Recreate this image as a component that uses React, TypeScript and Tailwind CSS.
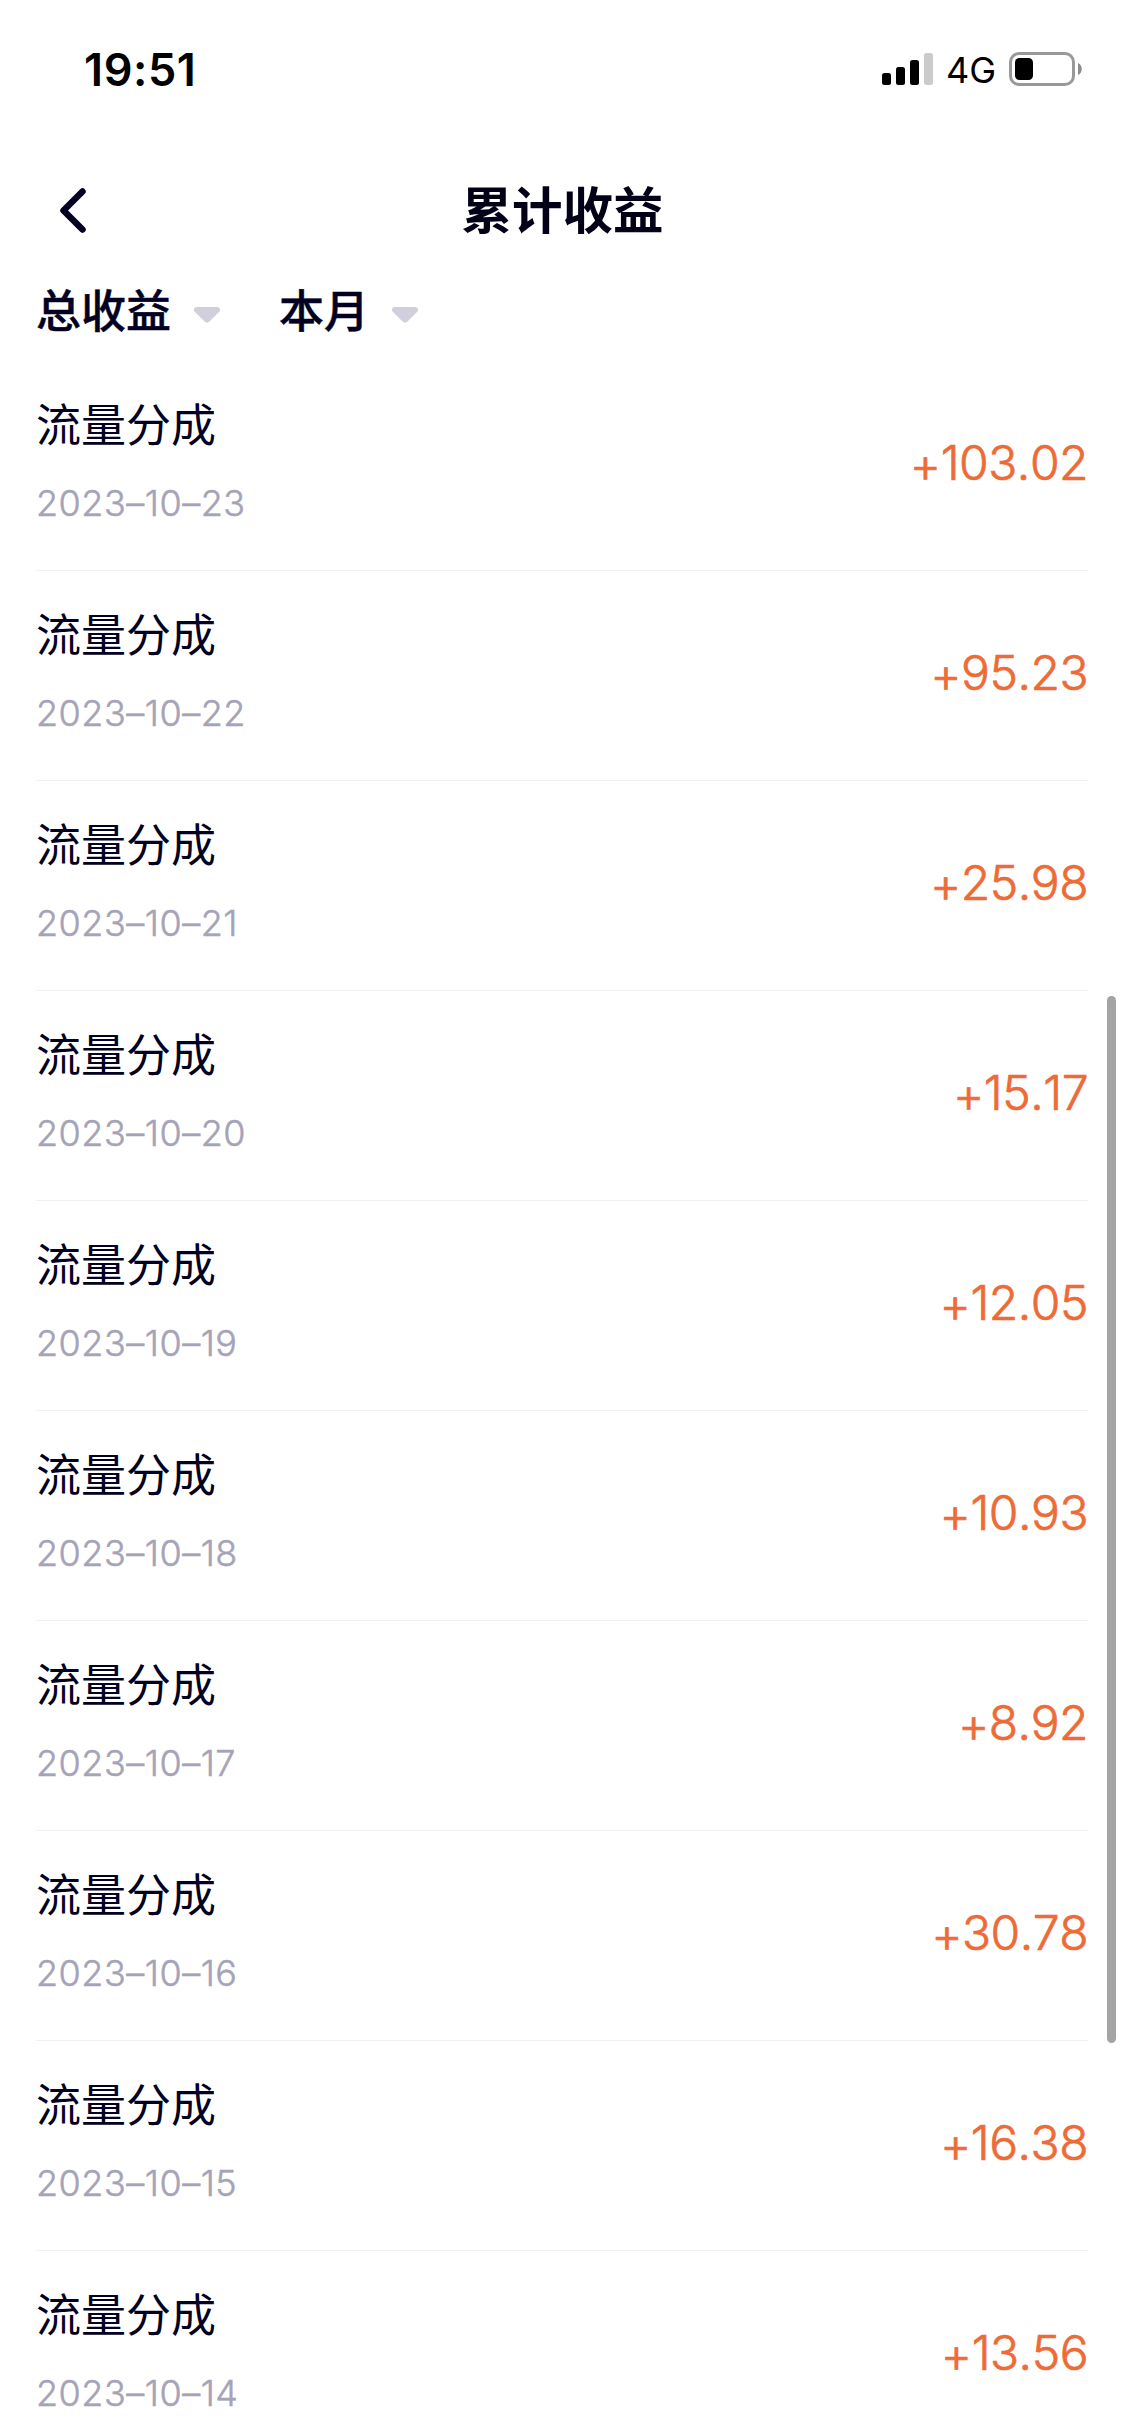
type Income = {
  date: string;
  amount: string;
};

// 收益列表
const incomes: Income[] = [
  { date: "2023–10–23", amount: "103.02" },
  { date: "2023–10–22", amount: "95.23" },
  { date: "2023–10–21", amount: "25.98" },
  { date: "2023–10–20", amount: "15.17" },
  { date: "2023–10–19", amount: "12.05" },
  { date: "2023–10–18", amount: "10.93" },
  { date: "2023–10–17", amount: "8.92" },
  { date: "2023–10–16", amount: "30.78" },
  { date: "2023–10–15", amount: "16.38" },
  { date: "2023–10–14", amount: "13.56" },
];

// 顶部状态栏
function StatusBar() {
  return (
    <div className="flex h-[138px] items-center justify-between pl-[84px] pr-[42px] text-black">
      <span className="text-[45px] leading-none font-semibold tracking-[0.6px]">19:51</span>
      <div className="flex items-center">
        {/* 信号 */}
        <svg width="52" height="32" viewBox="0 0 52 32">
          <rect x="0" y="20" width="9" height="12" rx="2.5" />
          <rect x="14" y="14" width="9" height="18" rx="2.5" />
          <rect x="28" y="7" width="9" height="25" rx="2.5" />
          <rect x="42" y="0" width="9" height="32" rx="2.5" fill="#cbcbcb" />
        </svg>
        <span className="mt-[2px] ml-[12px] w-[52px] text-[36px] leading-none whitespace-nowrap">4G</span>
        {/* 电池 */}
        <svg className="ml-[11px]" width="74" height="34" viewBox="0 0 74 34">
          <rect x="1.5" y="1.5" width="63" height="31" rx="8.5" fill="none" stroke="#999" strokeWidth="3" />
          <rect x="6" y="6" width="18" height="22" rx="4.5" />
          <path d="M69 11c5 2 5 10 0 12z" fill="#8c8c8c" />
        </svg>
      </div>
    </div>
  );
}

// 下拉筛选
function Filter({ label }: { label: string }) {
  return (
    <button className="flex items-center text-[45px] leading-[60px] font-medium [-webkit-text-stroke:0.5px]">
      {label}
      <svg className="mt-[5px] ml-[23px]" width="26" height="16" viewBox="0 0 26 16">
        <path d="M3 0h20c3 0 4 3 2 5l-9.500 9.500c-1.500 1.500-3.500 1.500-5 0L1 5C-1 3 0 0 3 0z" fill="#d0cfdb" />
      </svg>
    </button>
  );
}

function IncomeRow({ date, amount }: Income) {
  return (
    <li className="flex h-[210px] items-center justify-between border-b border-[#f2f2f5]">
      <div className="flex flex-col pb-[11px]">
        <span className="text-[45px] leading-[60px]">流量分成</span>
        <span className="mt-[25px] text-[36px] leading-[44px] font-light tracking-[0.5px] text-[#a5a3b7] [-webkit-text-stroke:0.5px] [font-feature-settings:'calt'_0] [font-kerning:none]">
          {date}
        </span>
      </div>
      <span className="pb-[5px] text-[48px] leading-[60px] font-light tracking-[-0.5px] text-[#ed6b37] [-webkit-text-stroke:0.7px] [font-feature-settings:'calt'_0] [font-kerning:none]">
        <span className="align-[-2px] leading-none">+</span>
        {amount}
      </span>
    </li>
  );
}

export default function App() {
  return (
    <div className="relative h-[2436px] w-[1125px] overflow-hidden bg-white font-[Inter,'Noto_Sans_CJK_SC',sans-serif] text-[#020122]">
      <StatusBar />
      {/* 标题栏 */}
      <header className="grid h-[144px] grid-cols-[1fr_auto_1fr] items-center px-[60px]">
        <button aria-label="返回">
          <svg width="26" height="45" viewBox="0 0 26 45" fill="none" stroke="currentColor" strokeWidth="6.5" strokeLinecap="round" strokeLinejoin="round">
            <path d="M22.500 3.500L3.500 22.500L22.500 41.500" />
          </svg>
        </button>
        <h1 className="pt-[2px] text-[50.500px] leading-[68px] font-bold text-[#020016]">累计收益</h1>
      </header>
      {/* 筛选栏 */}
      <div className="flex h-[79px] items-start gap-[59px] px-[36px]">
        <Filter label="总收益" />
        <Filter label="本月" />
      </div>
      <ul className="pr-[37px] pl-[36px]">
        {incomes.map((item) => (
          <IncomeRow key={item.date} {...item} />
        ))}
      </ul>
      {/* 滚动条 */}
      <div className="absolute top-[996px] right-[9px] h-[1047px] w-[9px] rounded-full bg-[#a4a4a4]" />
    </div>
  );
}
